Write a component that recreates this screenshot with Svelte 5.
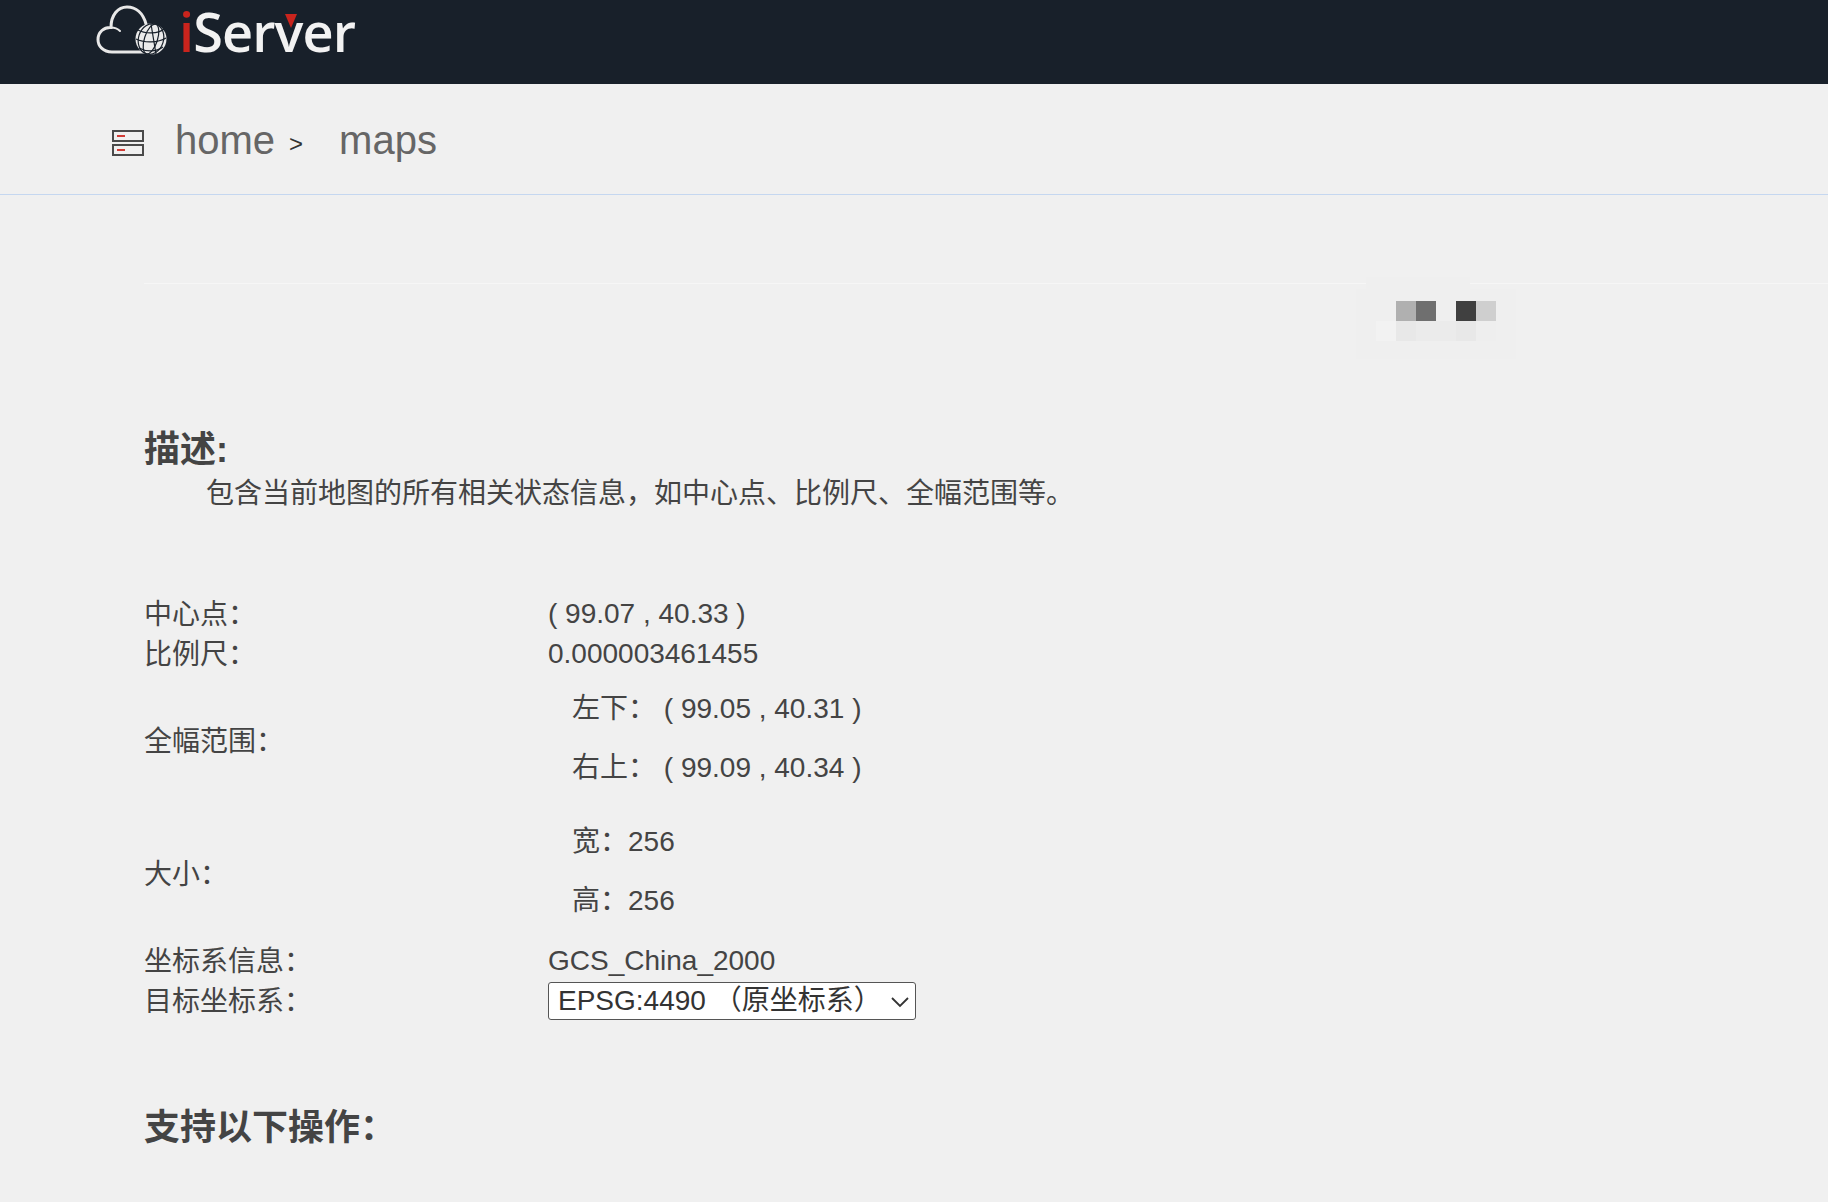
<script>
  const mosaic = [
    ['', '', '#b0b0b0', '#6f6f6f', '', '#404040', '#cfcfcf'],
    ['', '#f2f2f2', '#e8e8e8', '#ebebeb', '#ebebeb', '#e8e8e8', '#eeeeee']
  ];
</script>

<header class="topbar">
  <div class="logo">
    <svg class="logo-mark" width="74" height="52" viewBox="0 0 74 52" fill="none">
      <path d="M49 47H16C7 47 2 41 2 34.500C2 27 8 22 15 22.500C15 10 22 2 31 2C40 2 47 8 50 19" stroke="#e8e8e8" stroke-width="3" stroke-linecap="round" />
      <path d="M15 22.500C18.500 22.500 21.500 23.500 24 26" stroke="#e8e8e8" stroke-width="2" stroke-linecap="round" />
      <circle cx="55" cy="34" r="15.500" fill="#ebebeb" />
      <g stroke="#18202a" stroke-width="1.200" fill="none">
        <ellipse cx="55" cy="34" rx="6.500" ry="15.500" transform="rotate(18 55 34)" />
        <ellipse cx="55" cy="34" rx="12.500" ry="15.500" transform="rotate(18 55 34)" />
        <path d="M42 25C49 29 62 29 68 24M40 34C48 38 62 38 70 33M43 43C50 47 60 47 67 42" />
        <path d="M55 19L60 49" />
      </g>
    </svg>
    <span class="wordmark"><span class="red-i">i</span>Ser<span class="vee">v</span>er</span>
  </div>
</header>

<nav class="crumbs">
  <svg class="crumb-icon" width="32" height="26" viewBox="0 0 32 26" fill="none">
    <rect x="1" y="1" width="30" height="10" fill="none" stroke="#4a4a4a" stroke-width="2" />
    <rect x="1" y="15" width="30" height="10" fill="none" stroke="#4a4a4a" stroke-width="2" />
    <rect x="5" y="5" width="8" height="2" fill="#d13b35" />
    <rect x="5" y="19" width="8" height="2" fill="#d13b35" />
  </svg>
  <span class="crumb">home</span>
  <span class="sep">&gt;</span>
  <span class="crumb last">maps</span>
</nav>

<main class="content">
  <div class="rule">
    <div class="redacted">
      {#each mosaic as row}
        {#each row as cell}
          <i style:background={cell || 'transparent'}></i>
        {/each}
      {/each}
    </div>
  </div>

  <h2 class="first">描述:</h2>
  <p class="desc">包含当前地图的所有相关状态信息，如中心点、比例尺、全幅范围等。</p>

  <div class="info">
    <div class="label">中心点：</div>
    <div class="value">( 99.07 , 40.33 )</div>

    <div class="label">比例尺：</div>
    <div class="value">0.000003461455</div>

    <div class="label low">全幅范围：</div>
    <div class="group">
      <div>左下：&nbsp;( 99.05 , 40.31 )</div>
      <div>右上：&nbsp;( 99.09 , 40.34 )</div>
    </div>

    <div class="label size-label">大小：</div>
    <div class="group size">
      <div>宽：256</div>
      <div>高：256</div>
    </div>

    <div class="label">坐标系信息：</div>
    <div class="value">GCS_China_2000</div>

    <div class="label">目标坐标系：</div>
    <div class="select-wrap">
      <select>
        <option>EPSG:4490 （原坐标系）</option>
      </select>
      <svg width="20" height="12" viewBox="0 0 20 12" fill="none">
        <path d="M2 2L10 10L18 2" stroke="#333" stroke-width="1.800" />
      </svg>
    </div>
  </div>

  <h2 class="ops">支持以下操作：</h2>
</main>

<style>
  :global(body) {
    margin: 0;
    background: #f0f0f0;
    color: #444;
    font-family: "Liberation Sans", "Noto Sans CJK SC", sans-serif;
    font-size: 28px;
    overflow: hidden;
  }

  .topbar {
    height: 84px;
    background: #18202a;
    display: flex;
    align-items: flex-start;
    padding-left: 96px;
  }

  .logo {
    display: flex;
    align-items: flex-start;
    gap: 9px;
    padding-top: 5px;
  }

  .wordmark {
    font-family: "Open Sans", sans-serif;
    font-size: 54px;
    font-weight: 600;
    line-height: 54px;
    color: #f2f2f2;
    letter-spacing: -0.9px;
    margin-top: -1px;
  }

  .red-i {
    color: #c9241d;
  }

  .vee {
    position: relative;
  }

  .vee::before {
    content: "";
    position: absolute;
    left: 10px;
    top: 20px;
    border-left: 6px solid transparent;
    border-right: 6px solid transparent;
    border-top: 14px solid #c9241d;
  }

  .crumbs {
    height: 110px;
    border-bottom: 1px solid #c5d7f0;
    display: flex;
    align-items: center;
    padding-left: 112px;
    color: #666;
  }

  .crumb-icon {
    margin-right: 31px;
    margin-top: 7px;
  }

  .crumb {
    font-size: 40px;
    margin-top: 2px;
  }

  .sep {
    font-size: 24px;
    color: #333;
    margin: 10px 36px 0 14px;
  }

  .content {
    padding-left: 144px;
  }

  .rule {
    position: relative;
    margin-top: 88px;
    height: 1px;
    background: #f6f6f6;
  }

  .redacted {
    position: absolute;
    left: 1212px;
    top: 6px;
    padding: 12px 20px 18px 0;
    display: grid;
    grid-template-columns: repeat(7, 20px);
    grid-auto-rows: 20px;
    background: #efefef;
  }

  .redacted::before {
    content: "";
    position: absolute;
    left: 10px;
    top: -12px;
    width: 104px;
    height: 12px;
    background: #efefef;
  }

  .redacted i {
    display: block;
  }

  h2 {
    margin: 0;
    font-size: 36px;
    line-height: 44px;
    font-weight: 700;
  }

  .first {
    margin-top: 144px;
  }

  .desc {
    margin: 0;
    padding-left: 62px;
    line-height: 44px;
  }

  .info {
    display: grid;
    grid-template-columns: 404px 1fr;
    align-items: center;
    line-height: 40px;
    margin-top: 79px;
  }

  .value {
    margin-top: -2px;
  }

  .low {
    padding-top: 4px;
  }

  .size-label {
    padding-top: 2px;
  }

  .group {
    padding: 4px 0 8px;
  }

  .group > div {
    line-height: 59px;
    padding-left: 24px;
  }

  .size {
    padding: 7px 0 12px;
  }

  .select-wrap {
    position: relative;
    width: 368px;
    height: 38px;
    margin-top: -2px;
  }

  .select-wrap svg {
    position: absolute;
    right: 6px;
    top: 14px;
    pointer-events: none;
  }

  select {
    appearance: none;
    box-sizing: border-box;
    display: block;
    width: 100%;
    height: 38px;
    padding: 0 0 0 9px;
    border: 1px solid #555;
    border-radius: 3px;
    background: #fff;
    color: #333;
    font: inherit;
    line-height: 36px;
  }

  .ops {
    margin-top: 84px;
  }
</style>
